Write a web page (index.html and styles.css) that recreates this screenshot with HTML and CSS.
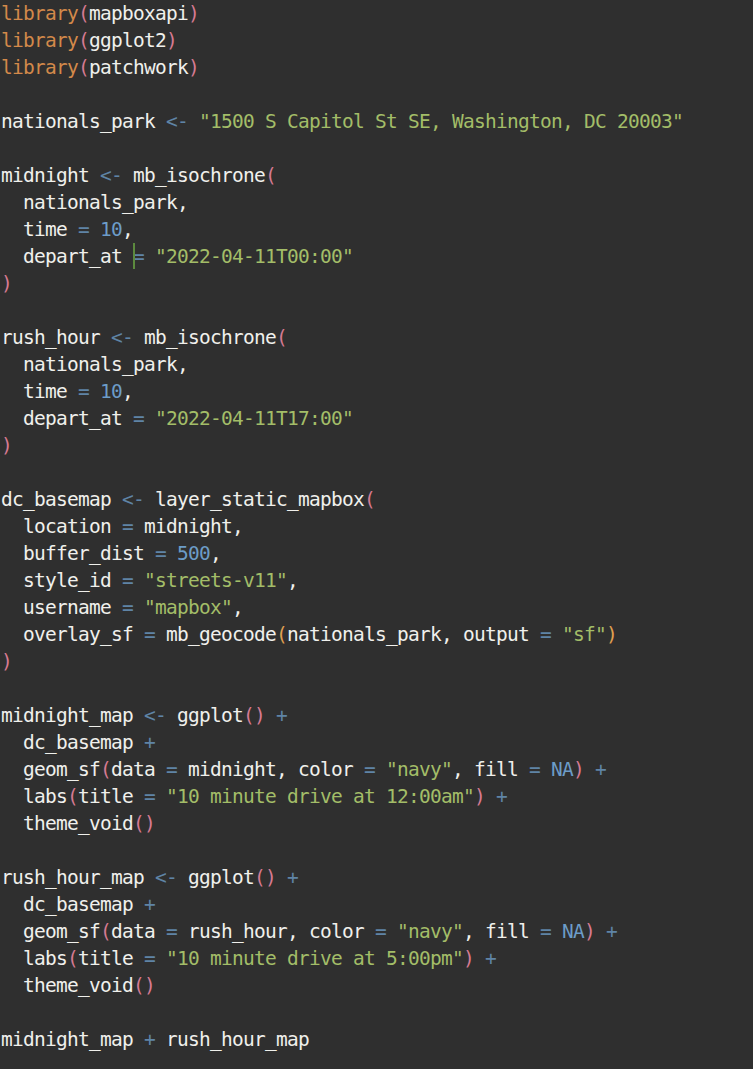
FILE: index.html
```html
<!DOCTYPE html>
<html>
<head>
<meta charset="utf-8">
<link rel="stylesheet" href="styles.css">
</head>
<body>
<pre class="code"><span class="kw">library</span><span class="p1">(</span>mapboxapi<span class="p1">)</span>
<span class="kw">library</span><span class="p1">(</span>ggplot2<span class="p1">)</span>
<span class="kw">library</span><span class="p1">(</span>patchwork<span class="p1">)</span>

nationals_park <span class="op">&lt;-</span> <span class="str">"1500 S Capitol St SE, Washington, DC 20003"</span>

midnight <span class="op">&lt;-</span> mb_isochrone<span class="p1">(</span>
  nationals_park,
  time <span class="op">=</span> <span class="num">10</span>,
  depart_at <span class="cursor"></span><span class="op">=</span> <span class="str">"2022-04-11T00:00"</span>
<span class="p1">)</span>

rush_hour <span class="op">&lt;-</span> mb_isochrone<span class="p1">(</span>
  nationals_park,
  time <span class="op">=</span> <span class="num">10</span>,
  depart_at <span class="op">=</span> <span class="str">"2022-04-11T17:00"</span>
<span class="p1">)</span>

dc_basemap <span class="op">&lt;-</span> layer_static_mapbox<span class="p1">(</span>
  location <span class="op">=</span> midnight,
  buffer_dist <span class="op">=</span> <span class="num">500</span>,
  style_id <span class="op">=</span> <span class="str">"streets-v11"</span>,
  username <span class="op">=</span> <span class="str">"mapbox"</span>,
  overlay_sf <span class="op">=</span> mb_geocode<span class="p2">(</span>nationals_park, output <span class="op">=</span> <span class="str">"sf"</span><span class="p2">)</span>
<span class="p1">)</span>

midnight_map <span class="op">&lt;-</span> ggplot<span class="p1">()</span> <span class="op">+</span>
  dc_basemap <span class="op">+</span>
  geom_sf<span class="p1">(</span>data <span class="op">=</span> midnight, color <span class="op">=</span> <span class="str">"navy"</span>, fill <span class="op">=</span> <span class="num">NA</span><span class="p1">)</span> <span class="op">+</span>
  labs<span class="p1">(</span>title <span class="op">=</span> <span class="str">"10 minute drive at 12:00am"</span><span class="p1">)</span> <span class="op">+</span>
  theme_void<span class="p1">()</span>

rush_hour_map <span class="op">&lt;-</span> ggplot<span class="p1">()</span> <span class="op">+</span>
  dc_basemap <span class="op">+</span>
  geom_sf<span class="p1">(</span>data <span class="op">=</span> rush_hour, color <span class="op">=</span> <span class="str">"navy"</span>, fill <span class="op">=</span> <span class="num">NA</span><span class="p1">)</span> <span class="op">+</span>
  labs<span class="p1">(</span>title <span class="op">=</span> <span class="str">"10 minute drive at 5:00pm"</span><span class="p1">)</span> <span class="op">+</span>
  theme_void<span class="p1">()</span>

midnight_map <span class="op">+</span> rush_hour_map</pre>
</body>
</html>
```

FILE: styles.css
```css
html, body {
  margin: 0;
  padding: 0;
  background: #2f2f2f;
  height: 100%;
}

.code {
  margin: 0;
  padding: 0 0 0 1px;
  font-family: "DejaVu Sans Mono", monospace;
  font-size: 19.5px;
  letter-spacing: -0.74px;
  line-height: 27px;
  color: #f0f0ec;
  white-space: pre;
}

.kw { color: #d3894a; }
.p1 { color: #d67a92; }
.p2 { color: #e0a050; }
.op { color: #5f84a6; }
.num { color: #6c9cc8; }
.str { color: #a3bd68; }

.cursor {
  position: relative;
  display: inline-block;
  width: 0;
  height: 0;
}

.cursor::before {
  content: "";
  position: absolute;
  left: 0;
  top: -20px;
  width: 2px;
  height: 26px;
  background: #5c8a3e;
}
```
